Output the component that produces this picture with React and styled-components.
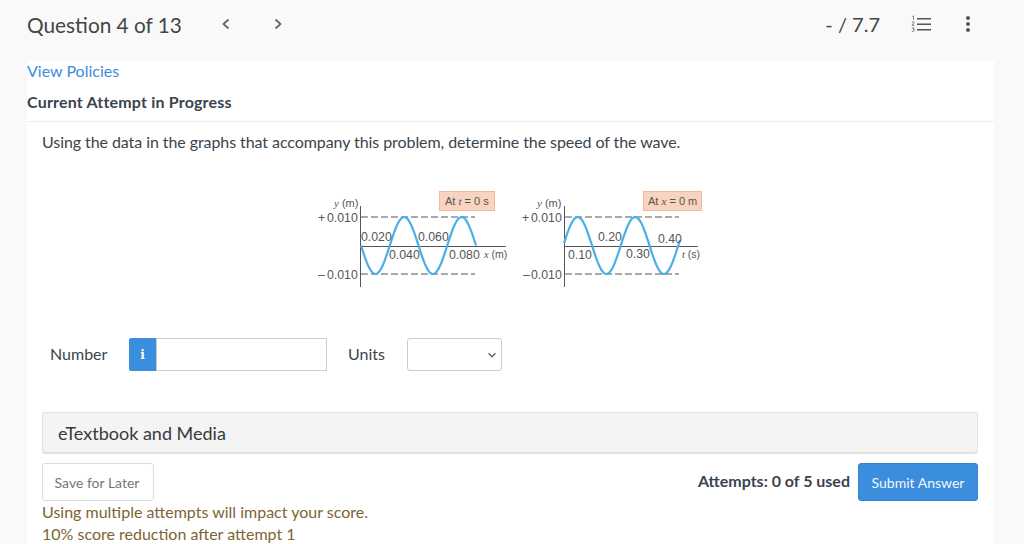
// React
import React from 'react';
// Styled components
import styled, { createGlobalStyle } from 'styled-components';

const GlobalStyle = createGlobalStyle`
  html, body {
    margin: 0;
    padding: 0;
    height: 544px;
    overflow: hidden;
    background: #f9f9f9;
    font-family: Lato, "Open Sans", sans-serif;
  }
`;

// Top bar
const TopBar = styled.header`
  display: flex;
  align-items: center;
  height: 61px;
  padding: 0 53px 13px 27px;
  box-sizing: border-box;
  color: #454545;
`;

const Title = styled.h1`
  margin: 0;
  width: 182px;
  font-size: 20.8px;
  font-weight: 400;
`;

const NavButton = styled.span`
  display: flex;
  width: ${(p) => p.$width}px;
  padding-left: 10px;
  color: #666;
`;

const Score = styled.span`
  margin-left: auto;
  margin-right: 31px;
  font-size: 20px;
`;

const ListIcon = styled.svg`
  width: 20px;
  height: 18px;
  margin-right: 34px;
`;

const DotsIcon = styled.svg`
  width: 6px;
  height: 18px;
`;

// White sheet
const Sheet = styled.main`
  width: 967px;
  height: 483px;
  margin-left: 27px;
  background: #fff;
  color: #3a444e;
  overflow: hidden;
`;

const PolicyLink = styled.a`
  display: block;
  font-size: 16px;
  line-height: 20px;
  color: #3b8ddd;
`;

const SectionHeading = styled.h2`
  margin: 0;
  padding: 11px 0 9px;
  font-size: 16px;
  line-height: 20px;
  font-weight: 700;
  letter-spacing: 0.19px;
  border-bottom: 1px solid #eee;
`;

const Body = styled.div`
  padding: 0 16px 0 15px;
`;

const Prompt = styled.p`
  margin: 9px 0 0;
  font-size: 16px;
  line-height: 21px;
  letter-spacing: -0.075px;
`;

const Figure = styled.div`
  display: flex;
  justify-content: center;
  margin-top: 28px;
`;

const AnswerRow = styled.div`
  display: flex;
  align-items: center;
  margin-top: 48px;
  padding-left: 8px;
  height: 33px;
`;

const FieldLabel = styled.label`
  font-size: 16px;
  padding-bottom: 2px;
  width: ${(p) => p.$width}px;
`;

const InfoTag = styled.span`
  display: flex;
  align-items: center;
  justify-content: center;
  width: 27px;
  height: 33px;
  background: #3b8ddd;
  border-radius: 2px 0 0 2px;
  color: #fff;
  font-family: "DejaVu Serif", serif;
  font-size: 12px;
  font-weight: 700;
`;

const NumberBox = styled.div`
  width: 171px;
  height: 33px;
  box-sizing: border-box;
  border: 1px solid #ccc;
  margin-right: 21px;
  background: #fff;
`;

const UnitSelect = styled.div`
  display: flex;
  align-items: center;
  justify-content: flex-end;
  width: 95px;
  height: 33px;
  box-sizing: border-box;
  padding-right: 3px;
  border: 1px solid #ccc;
  border-radius: 3px;
  color: #666;
`;

const MediaBar = styled.div`
  display: flex;
  align-items: center;
  height: 42px;
  box-sizing: border-box;
  margin-top: 41px;
  padding-left: 15px;
  background: #f4f4f4;
  border: 1px solid #e2e2e2;
  border-bottom-width: 2px;
  border-radius: 3px;
  font-size: 18px;
  color: #3a3a3a;
`;

const ActionRow = styled.div`
  display: flex;
  align-items: center;
  justify-content: space-between;
  margin-top: 9px;
`;

const SaveButton = styled.button`
  width: 112px;
  height: 38px;
  padding: 0 2px 0 0;
  background: #fff;
  border: 1px solid #ddd;
  border-radius: 3px;
  font-family: inherit;
  font-size: 14px;
  color: #777;
`;

const SubmitGroup = styled.div`
  display: flex;
  align-items: center;
  gap: 8px;
`;

const AttemptCount = styled.span`
  font-size: 16px;
  font-weight: 700;
  margin-top: -4px;
`;

const SubmitButton = styled.button`
  width: 120px;
  height: 38px;
  padding: 0;
  background: #3b8ddd;
  border: 1px solid #3783cd;
  border-radius: 3px;
  font-family: inherit;
  font-size: 14px;
  color: #f2f7fc;
`;

const Notice = styled.div`
  font-size: 16px;
  line-height: 22px;
  color: #7d6534;
`;

// Axis text inside the graphs
const GraphLabel = styled.text`
  font-family: "Liberation Sans", Arial, sans-serif;
  font-size: ${(p) => p.$size || 12.3}px;
  fill: #555;
`;

const AxisLetter = styled.tspan`
  font-family: "Liberation Serif", serif;
  font-style: italic;
`;

/**
 * @description Build the sine curve of a graph as an svg path
 * @param {number} x0 left end
 * @param {number} x1 right end
 * @param {number} phase start angle
 */
const sinePath = (x0, x1, phase) => {
  const points = [];
  for (let x = x0; x <= x1; x += 1) {
    const y = 245.5 - 28.5 * Math.sin(phase + ((x - x0) / 57.5) * 2 * Math.PI);
    points.push(`${x},${y.toFixed(1)}`);
  }
  return `M${points.join(' L')}`;
};

// Wave graphs, drawn in a 420x110 canvas
const WaveGraphs = () => (
  <svg width="420" height="110" viewBox="300 180 420 110">
    <g stroke="#555" fill="none">
      <path d="M360.5 206V287M360 246.5H506" strokeWidth="1" />
      <path d="M361 217H475M361 274H475" strokeWidth="1" strokeDasharray="7 3" />
      <path d="M564.5 206V287M564 246.5H698" strokeWidth="1" />
      <path d="M565 217H679M565 274H679" strokeWidth="1" strokeDasharray="7 3" />
    </g>
    <path d={sinePath(361, 476, Math.PI)} stroke="#4aaee8" strokeWidth="2.2" fill="none" />
    <path d={sinePath(564, 680, 0.08)} stroke="#4aaee8" strokeWidth="2.2" fill="none" />

    <rect x="439.5" y="191.5" width="55" height="19" fill="#f8d3c0" stroke="#eeb9a0" />
    <GraphLabel x="445" y="205" $size={11}>At <AxisLetter>t</AxisLetter> = 0 s</GraphLabel>
    <rect x="643.5" y="191.5" width="58" height="19" fill="#f8d3c0" stroke="#eeb9a0" />
    <GraphLabel x="648" y="205" $size={11}>At <AxisLetter>x</AxisLetter> = 0 m</GraphLabel>

    <GraphLabel x="334" y="207" $size={11}><AxisLetter>y</AxisLetter> (m)</GraphLabel>
    <GraphLabel x="318" y="222">+</GraphLabel>
    <GraphLabel x="327" y="222">0.010</GraphLabel>
    <GraphLabel x="318" y="279">–</GraphLabel>
    <GraphLabel x="327" y="279">0.010</GraphLabel>
    <GraphLabel x="361" y="241">0.020</GraphLabel>
    <GraphLabel x="418" y="241">0.060</GraphLabel>
    <GraphLabel x="389" y="259">0.040</GraphLabel>
    <GraphLabel x="449" y="259">0.080</GraphLabel>
    <GraphLabel x="484" y="258" $size={10.5}><AxisLetter>x</AxisLetter> (m)</GraphLabel>

    <GraphLabel x="537" y="207" $size={11}><AxisLetter>y</AxisLetter> (m)</GraphLabel>
    <GraphLabel x="522" y="222">+</GraphLabel>
    <GraphLabel x="531" y="222">0.010</GraphLabel>
    <GraphLabel x="523" y="279">–</GraphLabel>
    <GraphLabel x="531" y="279">0.010</GraphLabel>
    <GraphLabel x="598" y="241">0.20</GraphLabel>
    <GraphLabel x="658" y="243">0.40</GraphLabel>
    <GraphLabel x="568" y="259">0.10</GraphLabel>
    <GraphLabel x="626" y="258">0.30</GraphLabel>
    <GraphLabel x="682" y="258" $size={10.5}><AxisLetter>t</AxisLetter> (s)</GraphLabel>
  </svg>
);

const Chevron = ({ d, size = 14 }) => (
  <svg width={size} height={size} viewBox="0 0 14 14" fill="none" stroke="currentColor" strokeWidth="1.8">
    <path d={d} />
  </svg>
);

/**
 * @description Question page
 */
const App = () => (
  <>
    <GlobalStyle />
    <TopBar>
      <Title>Question 4 of 13</Title>
      <NavButton $width={42}>
        <Chevron d="M9.5 2.5 L4.5 7 L9.5 11.5" />
      </NavButton>
      <NavButton $width={20}>
        <Chevron d="M4.5 2.5 L9.5 7 L4.5 11.5" />
      </NavButton>
      <Score>- / 7.7</Score>
      <ListIcon viewBox="0 0 20 18">
        <path d="M6 3h14v1.6H6zM6 8.5h14v1.6H6zM6 14h14v1.6H6z" fill="#555" />
        <path d="M1.5 1.5l1-.7v4M.8 7h2.4v.5L1 10.3h2.4M.8 13h2.4l-1 1.3c1 0 1.2.5 1.2 1s-.5 1-1.3 1H.8" stroke="#555" strokeWidth="0.7" fill="none" />
      </ListIcon>
      <DotsIcon viewBox="0 0 6 18">
        <circle cx="3" cy="3" r="2" fill="#555" />
        <circle cx="3" cy="9" r="2" fill="#555" />
        <circle cx="3" cy="15" r="2" fill="#555" />
      </DotsIcon>
    </TopBar>
    <Sheet>
      <PolicyLink>View Policies</PolicyLink>
      <SectionHeading>Current Attempt in Progress</SectionHeading>
      <Body>
        <Prompt>Using the data in the graphs that accompany this problem, determine the speed of the wave.</Prompt>
        <Figure>
          <WaveGraphs />
        </Figure>
        <AnswerRow>
          <FieldLabel $width={79}>Number</FieldLabel>
          <InfoTag>i</InfoTag>
          <NumberBox />
          <FieldLabel $width={59}>Units</FieldLabel>
          <UnitSelect>
            <Chevron d="M3 5 L7 9 L11 5" size={12} />
          </UnitSelect>
        </AnswerRow>
        <MediaBar>eTextbook and Media</MediaBar>
        <ActionRow>
          <SaveButton>Save for Later</SaveButton>
          <SubmitGroup>
            <AttemptCount>Attempts: 0 of 5 used</AttemptCount>
            <SubmitButton>Submit Answer</SubmitButton>
          </SubmitGroup>
        </ActionRow>
        <Notice>
          Using multiple attempts will impact your score.
          <br />
          10% score reduction after attempt 1
        </Notice>
      </Body>
    </Sheet>
  </>
);

export default App;
